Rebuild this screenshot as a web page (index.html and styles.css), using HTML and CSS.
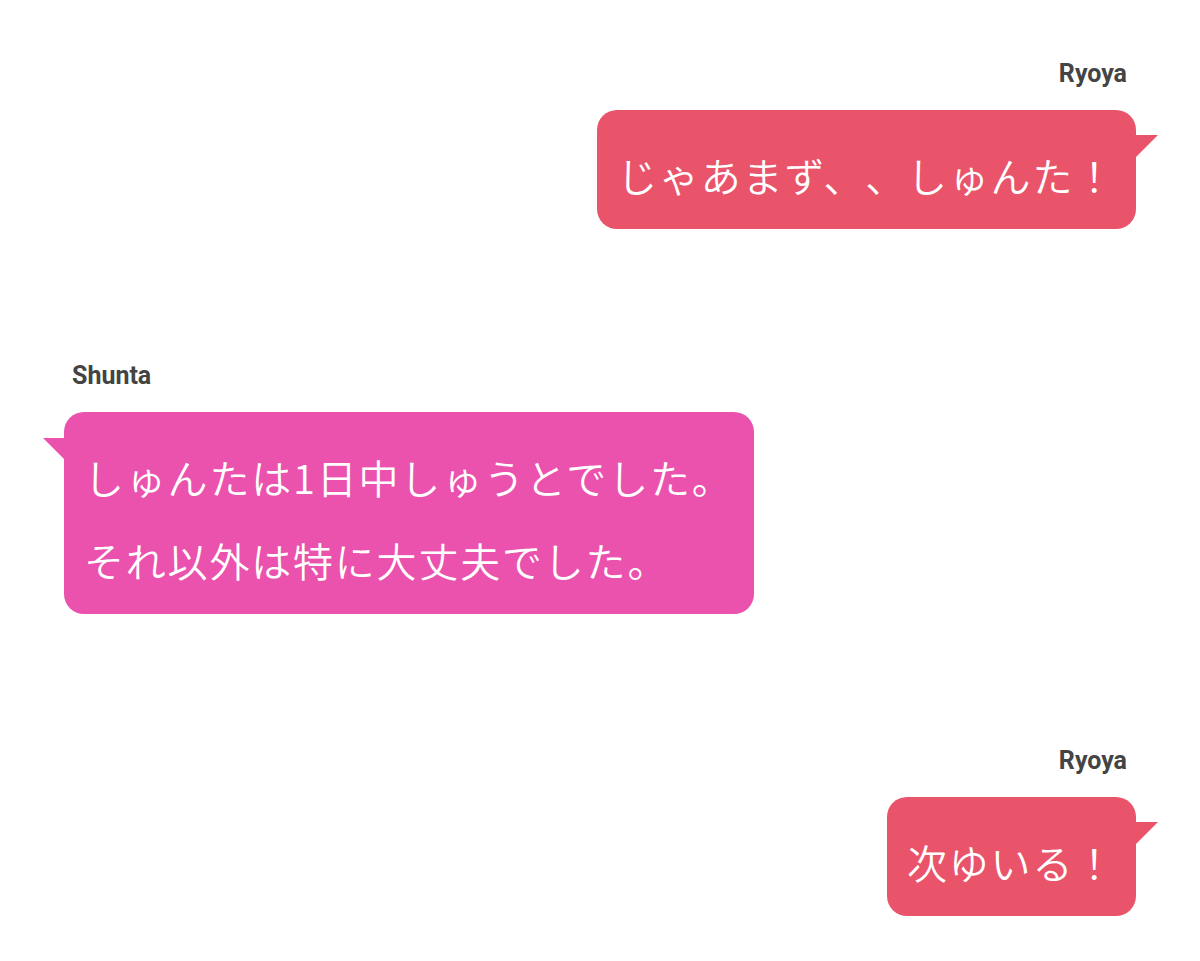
FILE: index.html
```html
<!DOCTYPE html>
<html lang="ja">
<head>
    <meta charset="UTF-8">
    <meta name="viewport" content="width=device-width, initial-scale=1.0">
    <title>チャット</title>
    <link rel="stylesheet" href="styles.css">
</head>
<body>
    <div class="chat">
        <div class="message right">
            <div class="name">Ryoya</div>
            <div class="bubble">じゃあまず、、しゅんた！</div>
        </div>

        <div class="message left">
            <div class="name">Shunta</div>
            <div class="bubble">しゅんたは1日中しゅうとでした。<br>それ以外は特に大丈夫でした。</div>
        </div>

        <div class="message right">
            <div class="name">Ryoya</div>
            <div class="bubble">次ゆいる！</div>
        </div>
    </div>
</body>
</html>
```

FILE: styles.css
```css
body {
    margin: 0;
    background-color: #ffffff;
    font-family: Roboto, "Noto Sans CJK JP", sans-serif;
}
.chat {
    display: flex;
    flex-direction: column;
    gap: 132px;
    padding: 59px 64px 0;
}
.message {
    display: flex;
    flex-direction: column;
    gap: 22px;
}
.message.right {
    align-items: flex-end;
}
.message.left {
    align-items: flex-start;
}
.name {
    font-family: Roboto, sans-serif;
    font-weight: bold;
    font-size: 25px;
    line-height: 29px;
    color: #444444;
}
.right .name {
    margin-right: 9px;
}
.left .name {
    margin-left: 8px;
}
.bubble {
    position: relative;
    padding: 24px 20px 12px;
    border-radius: 20px;
    font-family: "Noto Sans CJK JP", sans-serif;
    font-weight: 350;
    font-size: 40px;
    line-height: 83px;
    letter-spacing: 1.8px;
    text-spacing-trim: space-all;
    color: #ffffff;
    white-space: nowrap;
}
.right .bubble {
    background-color: #e9546b;
}
.left .bubble {
    background-color: #eb52ad;
}
/* しっぽ */
.bubble::after {
    content: "";
    position: absolute;
    width: 0;
    height: 0;
}
.right .bubble::after {
    left: 100%;
    top: 25px;
    border-top: 22px solid #e9546b;
    border-right: 22px solid transparent;
}
.left .bubble::after {
    right: 100%;
    top: 26px;
    border-top: 21px solid #eb52ad;
    border-left: 21px solid transparent;
}
```
